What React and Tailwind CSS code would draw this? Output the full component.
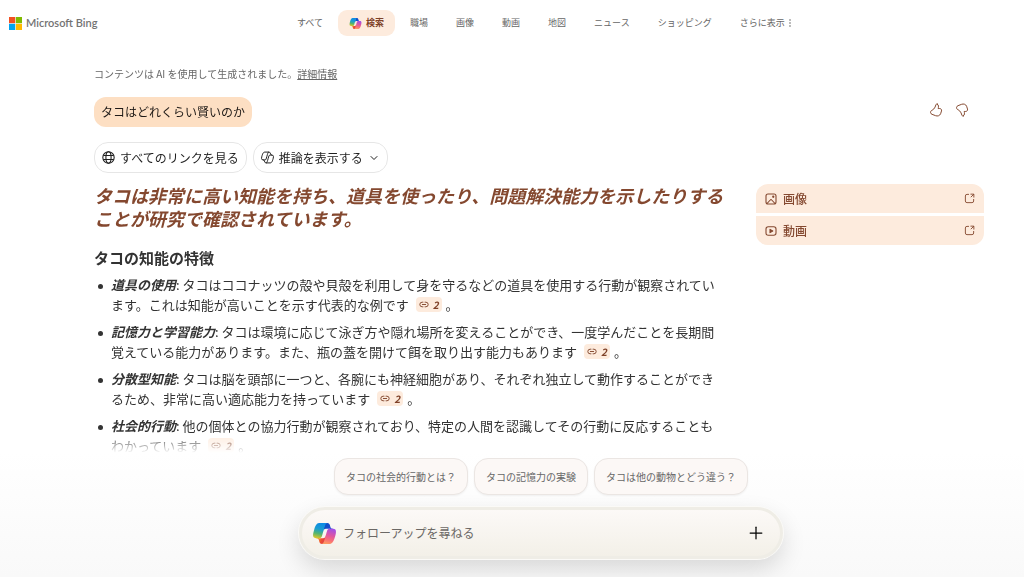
import { useId } from "react";
import { ChevronDown, Plus } from "lucide-react";

const navItems = ["職場", "画像", "動画", "地図", "ニュース", "ショッピング"];

const features = [
  {
    title: "道具の使用",
    text: "タコはココナッツの殻や貝殻を利用して身を守るなどの道具を使用する行動が観察されています。これは知能が高いことを示す代表的な例です",
  },
  {
    title: "記憶力と学習能力",
    text: "タコは環境に応じて泳ぎ方や隠れ場所を変えることができ、一度学んだことを長期間覚えている能力があります。また、瓶の蓋を開けて餌を取り出す能力もあります",
  },
  {
    title: "分散型知能",
    text: "タコは脳を頭部に一つと、各腕にも神経細胞があり、それぞれ独立して動作することができるため、非常に高い適応能力を持っています",
  },
  {
    title: "社会的行動",
    text: "他の個体との協力行動が観察されており、特定の人間を認識してその行動に反応することもわかっています",
  },
];

const suggestions = ["タコの社会的行動とは？", "タコの記憶力の実験", "タコは他の動物とどう違う？"];

const COPILOT_LEFT =
  "M29.5 4H13.46c-4.583 0-7.332 6.057-9.165 12.113C2.123 23.29-.72 32.885 7.503 32.885h6.925a4.63 4.63 0 0 0 4.456-3.358 2078.617 2078.617 0 0 1 4.971-17.156c.843-2.843 1.544-5.284 2.621-6.805C27.08 4.714 28.086 4 29.5 4Z";
const COPILOT_RIGHT =
  "M18.498 44h16.04c4.582 0 7.332-6.058 9.165-12.115 2.171-7.177 5.013-16.775-3.208-16.775h-6.926a4.63 4.63 0 0 0-4.455 3.358 2084.036 2084.036 0 0 1-4.972 17.16c-.842 2.843-1.544 5.285-2.62 6.806-.604.852-1.61 1.566-3.024 1.566Z";

const CopilotLogo = ({ className }) => {
  const id = useId();
  return (
    <svg viewBox="0 0 48 48" className={className} aria-hidden="true">
      <defs>
        <linearGradient id={`${id}a`} x1="26" y1="6" x2="40" y2="15" gradientUnits="userSpaceOnUse">
          <stop stopColor="#0b4fc4" />
          <stop offset="1" stopColor="#2348d8" />
        </linearGradient>
        <linearGradient id={`${id}b`} x1="10" y1="34" x2="25" y2="42" gradientUnits="userSpaceOnUse">
          <stop stopColor="#f7a531" />
          <stop offset="0.5" stopColor="#ee4d32" />
          <stop offset="1" stopColor="#d93a4e" />
        </linearGradient>
        <linearGradient id={`${id}c`} x1="17" y1="4" x2="11" y2="33" gradientUnits="userSpaceOnUse">
          <stop stopColor="#0d8ae6" />
          <stop offset="0.4" stopColor="#1a9dd0" />
          <stop offset="0.7" stopColor="#52b471" />
          <stop offset="1" stopColor="#d9c52a" />
        </linearGradient>
        <linearGradient id={`${id}d`} x1="38" y1="15" x2="30" y2="44" gradientUnits="userSpaceOnUse">
          <stop stopColor="#a04ee8" />
          <stop offset="0.45" stopColor="#e0569f" />
          <stop offset="0.75" stopColor="#f97076" />
          <stop offset="1" stopColor="#fd9a62" />
        </linearGradient>
      </defs>
      <path
        fill={`url(#${id}a)`}
        d="M34.142 7.325A4.63 4.63 0 0 0 29.7 4H28.35a4.63 4.63 0 0 0-4.554 3.794L21.48 20.407l.575-1.965a4.63 4.63 0 0 1 4.444-3.33h7.853l3.294 1.282 3.175-1.283h-.926a4.63 4.63 0 0 1-4.443-3.325l-1.31-4.461Z"
      />
      <path
        fill={`url(#${id}b)`}
        d="M14.33 40.656A4.63 4.63 0 0 0 18.779 44h2.87a4.63 4.63 0 0 0 4.629-4.51l.312-12.163-.654 2.233a4.63 4.63 0 0 1-4.443 3.329h-7.919l-2.823-1.532-3.057 1.532h.912a4.63 4.63 0 0 1 4.447 3.344l1.279 4.423Z"
      />
      <path fill={`url(#${id}c)`} d={COPILOT_LEFT} />
      <path fill={`url(#${id}d)`} d={COPILOT_RIGHT} />
    </svg>
  );
};

const CopilotOutline = ({ className }) => (
  <svg viewBox="0 0 48 48" fill="none" stroke="currentColor" strokeWidth="3.6" strokeLinejoin="round" className={className} aria-hidden="true">
    <path d={COPILOT_LEFT} />
    <path d={COPILOT_RIGHT} />
    <path d="M29.5 4c2.6 0 4 1.4 4.7 3.5l1.3 4.3c.7 2 2 3.3 4.5 3.3M18.5 44c-2.6 0-4-1.4-4.7-3.5l-1.3-4.3c-.7-2-2-3.3-4.5-3.3" />
  </svg>
);

const MicrosoftLogo = () => (
  <svg viewBox="0 0 13 13" className="size-[13px]" aria-hidden="true">
    <path fill="#f25022" d="M0 0h6.2v6.2H0z" />
    <path fill="#7fba00" d="M6.8 0H13v6.2H6.8z" />
    <path fill="#00a4ef" d="M0 6.8h6.2V13H0z" />
    <path fill="#ffb900" d="M6.8 6.8H13V13H6.8z" />
  </svg>
);

const GlobeIcon = ({ className }) => (
  <svg viewBox="0 0 24 24" fill="none" stroke="currentColor" strokeWidth="2" className={className} aria-hidden="true">
    <circle cx="12" cy="12" r="10.5" />
    <ellipse cx="12" cy="12" rx="4.8" ry="10.5" />
    <path d="M2.5 8.3h19M2.5 15.7h19" />
  </svg>
);

const ThumbIcon = ({ className }) => (
  <svg viewBox="0 0 24 24" fill="none" stroke="currentColor" strokeWidth="1.7" strokeLinecap="round" strokeLinejoin="round" className={className} aria-hidden="true">
    <path d="M14.5 1.9c-1.200-.6-2.300-.1-2.600 1-.8 3.200-1.900 5.300-3.900 7.600-.8.900-1.700 1.300-2.900 1.900-1.800.9-2.700 2.500-2.400 4.200.3 1.500 1.200 2.300 2.500 2.800l6 2.300c3.400 1.300 7.300.3 8.700-3.300l1.500-4.600c.7-2.300-.8-4.300-3-4.300h-2.700c.7-2.300 1.200-6.300-1.200-7.600Z" />
  </svg>
);

const ImageIcon = ({ className }) => (
  <svg viewBox="0 0 24 24" fill="none" stroke="currentColor" strokeWidth="2.2" strokeLinecap="round" strokeLinejoin="round" className={className} aria-hidden="true">
    <rect x="2" y="2" width="20" height="20" rx="4" />
    <path d="m4.5 20.5 6-6.500a2 2 0 0 1 3 0l6 6.500" />
    <circle cx="16.500" cy="7.500" r="1.200" />
  </svg>
);

const VideoIcon = ({ className }) => (
  <svg viewBox="0 0 24 24" fill="none" stroke="currentColor" strokeWidth="2.2" strokeLinejoin="round" className={className} aria-hidden="true">
    <rect x="2" y="3.5" width="20" height="17" rx="4.5" />
    <path fill="currentColor" d="m10 8.7 5.5 3.3-5.5 3.3Z" />
  </svg>
);

const OpenIcon = ({ className }) => (
  <svg viewBox="0 0 24 24" fill="none" stroke="currentColor" strokeWidth="2" strokeLinecap="round" strokeLinejoin="round" className={className} aria-hidden="true">
    <path d="M10 3H6.500A3.500 3.500 0 0 0 3 6.500v11A3.500 3.500 0 0 0 6.500 21h11a3.500 3.500 0 0 0 3.500-3.500V14M15 2.500h6.500V9M21 3l-5.500 5.500" />
  </svg>
);

const LinkIcon = ({ className }) => (
  <svg viewBox="0 0 24 16" fill="none" stroke="currentColor" strokeWidth="2.2" strokeLinecap="round" className={className} aria-hidden="true">
    <path d="M9.5 2.500h-2a5.500 5.500 0 0 0 0 11h2M14.500 2.500h2a5.500 5.500 0 0 1 0 11h-2M8 8h8" />
  </svg>
);

const Citation = () => (
  <a href="#source-2" className="mx-1 inline-flex h-[15px] items-center gap-1 rounded bg-[#fdebdd] px-[3px] align-[2px] text-[10px] leading-none font-bold text-[#7f4229] italic">
    <LinkIcon className="h-[7px] w-[10px]" />
    2
  </a>
);

const SideLink = ({ icon: Icon, label, className }) => (
  <a href="#more" className={`flex h-[29px] items-center bg-[#fdebdd] px-[9px] text-[12px] font-medium text-[#84482f] ${className}`}>
    <Icon className="mr-[6px] size-[12px]" />
    {label}
    <OpenIcon className="ml-auto size-[11px]" />
  </a>
);

const Header = () => (
  <header className="flex h-[46px] shrink-0 items-center">
    <a href="#home" className="flex w-[283px] shrink-0 items-center gap-1 pl-[9px] font-[Lato,sans-serif] text-[11px] font-semibold text-[#737373]">
      <MicrosoftLogo />
      Microsoft Bing
    </a>
    <nav className="flex items-center text-[9px] whitespace-nowrap text-[#666666]">
      <a href="#all" className="px-[14px]">すべて</a>
      <a href="#search" className="mx-px flex h-[26px] items-center gap-1 rounded-[9px] bg-[#fdebdd] px-[11px] font-bold text-[#7f4229]">
        <CopilotLogo className="size-[13px]" />
        検索
      </a>
      {navItems.map((item) => (
        <a key={item} href="#nav" className="px-[14px]">{item}</a>
      ))}
      <button type="button" className="flex items-center gap-1 px-[14px]">
        さらに表示
        <svg viewBox="0 0 2 8" className="h-[8px] w-[2px] fill-current" aria-hidden="true">
          <circle cx="1" cy="1" r="0.8" />
          <circle cx="1" cy="4" r="0.8" />
          <circle cx="1" cy="7" r="0.8" />
        </svg>
      </button>
    </nav>
  </header>
);

const Answer = () => (
  <article className="min-w-0 flex-1 text-[#333333]">
    <h2 className="text-[18px] leading-[23px] font-bold text-[#84482f] italic">
      タコは非常に高い知能を持ち、道具を使ったり、問題解決能力を示したりすることが研究で確認されています。
    </h2>
    <h3 className="mt-[18px] text-[15px] leading-[20px] font-bold">タコの知能の特徴</h3>
    <ul className="mt-[7px] space-y-[7px] text-[13px] leading-[20px]">
      {features.map((feature) => (
        <li key={feature.title} className="flex">
          <span className="mt-[9px] mr-2 ml-1 size-[5px] shrink-0 rounded-full bg-[#333333]" />
          <p>
            <strong className="italic">{feature.title}</strong>: {feature.text} <Citation />。
          </p>
        </li>
      ))}
    </ul>
  </article>
);

const Composer = () => (
  <footer className="flex h-[124px] shrink-0 flex-col items-center gap-3 bg-gradient-to-b from-white to-[#f9f9f9] pt-[5px] pr-[36px] pl-[94px]">
    <div className="flex gap-[6px]">
      {suggestions.map((text) => (
        <button key={text} type="button" className="h-[37px] rounded-[14px] border border-[#ebe6e3] bg-[#fcf8f6] px-[11px] text-[10px] text-[#666666] shadow-xs">
          {text}
        </button>
      ))}
    </div>
    <form className="flex h-[52px] w-full max-w-[484px] items-center rounded-[26px] border-[3px] border-[#efede6] bg-gradient-to-b from-[#fcf9f7] to-[#f3f0e8] pr-[14px] pl-[10px] shadow-[0_0_0_1px_#fbfaf7,0_10px_24px_rgba(0,0,0,0.14)]">
      <CopilotLogo className="size-[25px]" />
      <input
        type="text"
        aria-label="フォローアップを尋ねる"
        placeholder="フォローアップを尋ねる"
        className="ml-[6px] min-w-0 flex-1 bg-transparent text-[12px] outline-none placeholder:text-[#6b6865]"
      />
      <button type="button" aria-label="追加">
        <Plus className="size-[20px] text-black" strokeWidth={1.5} />
      </button>
    </form>
  </footer>
);

export default function App() {
  return (
    <div lang="ja" className="flex h-screen flex-col overflow-hidden bg-white font-['Noto_Sans_CJK_JP',sans-serif]">
      <Header />
      <main className="min-h-0 flex-1 overflow-hidden mask-[linear-gradient(to_top,transparent,black_20px)] pt-[21px] pr-[40px] pl-[94px]">
        <p className="text-[10px] leading-[14px] text-[#666666]">
          コンテンツは AI を使用して生成されました。
          <a href="#details" className="underline">詳細情報</a>
        </p>
        <div className="mt-4 flex items-center justify-between">
          <p className="rounded-[12px] bg-[#fddfc3] px-[7px] py-[5px] text-[12px] leading-[20px] text-[#1f1a17]">タコはどれくらい賢いのか</p>
          <div className="flex gap-3 pr-[15px] pb-1 text-[#84482f]">
            <button type="button" aria-label="高く評価"><ThumbIcon className="size-[14px]" /></button>
            <button type="button" aria-label="低く評価"><ThumbIcon className="size-[14px] -scale-y-100" /></button>
          </div>
        </div>
        <div className="mt-[15px] flex gap-[6px] text-[12px] text-[#1f1f1f]">
          <button type="button" className="flex h-[31px] items-center gap-[5px] rounded-[14px] border border-[#e6e6e6] px-[7px]">
            <GlobeIcon className="size-[13px]" />
            すべてのリンクを見る
          </button>
          <button type="button" className="flex h-[31px] items-center gap-[5px] rounded-[14px] border border-[#e6e6e6] px-[7px]">
            <CopilotOutline className="size-[13px]" />
            推論を表示する
            <ChevronDown className="size-[12px]" strokeWidth={2} />
          </button>
        </div>
        <div className="mt-[11px] flex items-start gap-8">
          <Answer />
          <aside className="flex w-[228px] shrink-0 flex-col gap-[3px]">
            <SideLink icon={ImageIcon} label="画像" className="rounded-t-[12px]" />
            <SideLink icon={VideoIcon} label="動画" className="rounded-b-[12px]" />
          </aside>
        </div>
      </main>
      <Composer />
    </div>
  );
}
